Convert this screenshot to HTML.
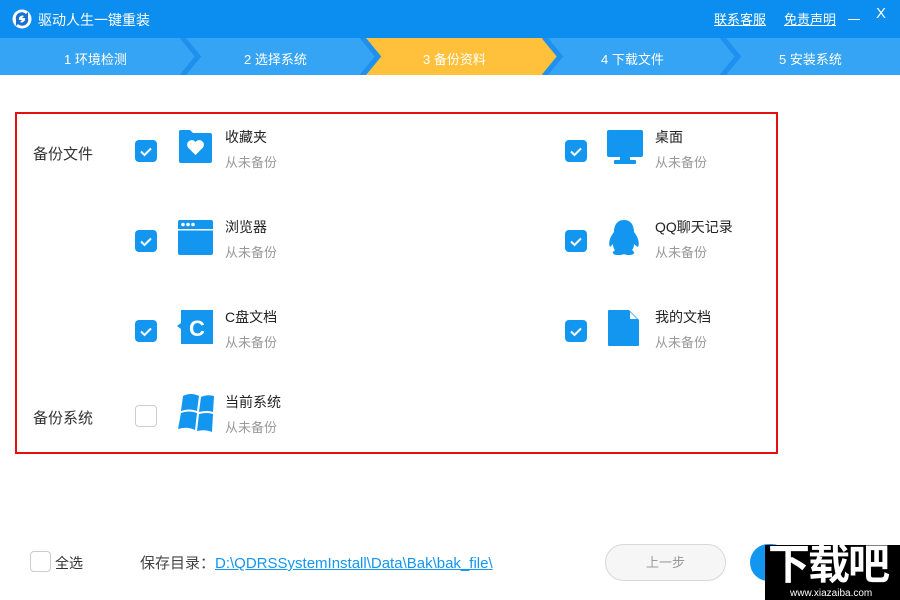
<!DOCTYPE html>
<html><head><meta charset="utf-8"><style>
*{margin:0;padding:0;box-sizing:border-box}
body{width:900px;height:600px;position:relative;overflow:hidden;background:#fff;font-family:"Liberation Sans","Noto Sans CJK SC",sans-serif;}
.a{position:absolute}
.cb{position:absolute;width:22px;height:22px;border-radius:4px;background:#1296f0}
.cb svg{position:absolute;left:0;top:0}
.t{position:absolute;font-size:14px;color:#222;white-space:nowrap}
.s{position:absolute;font-size:13px;color:#999;white-space:nowrap}
</style></head><body>
<div class="a" style="left:0;top:0;width:900px;height:38px;background:#0c8ef0"></div>
<svg class="a" style="left:12px;top:9px" width="20" height="20" viewBox="0 0 20 20"><circle cx="10" cy="10" r="9.5" fill="#fff"/><path d="M4 11 A6 6 0 0 1 14 5 L16 3 L16 9 L10 9 L12 7 A3.5 3.5 0 0 0 7 11Z" fill="#1a6fd0"/><path d="M16 9 A6 6 0 0 1 6 15 L4 17 L4 11 L10 11 L8 13 A3.5 3.5 0 0 0 13 9Z" fill="#1a6fd0"/></svg>
<div class="a" style="left:38px;top:10px;color:#fff;font-size:14px">驱动人生一键重装</div>
<div class="a" style="left:714px;top:9px;color:#fff;font-size:13px;text-decoration:underline">联系客服</div>
<div class="a" style="left:784px;top:9px;color:#fff;font-size:13px;text-decoration:underline">免责声明</div>
<div class="a" style="left:848px;top:19px;width:12px;height:1px;background:#fff"></div>
<div class="a" style="left:876px;top:5px;color:#fff;font-size:15px">X</div>
<svg class="a" style="left:0;top:38px" width="900" height="37">
<rect width="900" height="37" fill="#35a4f5"/>
<polygon points="363,0 545,0 563,18.5 545,37 363,37 381,18.5" fill="#ffc13b"/>
<g fill="none" stroke="#1e90ee" stroke-width="5">
<polyline points="182,-1 198,18.5 182,38"/>
<polyline points="362,-1 378,18.5 362,38"/>
<polyline points="544,-1 560,18.5 544,38"/>
<polyline points="722,-1 738,18.5 722,38"/>
</g>
</svg>
<div class="a" style="left:64px;top:49px;color:#fff;font-size:13px">1 环境检测</div>
<div class="a" style="left:244px;top:49px;color:#fff;font-size:13px">2 选择系统</div>
<div class="a" style="left:423px;top:49px;color:#fff;font-size:13px">3 备份资料</div>
<div class="a" style="left:601px;top:49px;color:#fff;font-size:13px">4 下载文件</div>
<div class="a" style="left:779px;top:49px;color:#fff;font-size:13px">5 安装系统</div>

<div class="a" style="left:15px;top:112px;width:763px;height:342px;border:2px solid #e61010"></div>
<div class="a" style="left:33px;top:143px;font-size:15px;color:#333">备份文件</div>
<div class="a" style="left:33px;top:407px;font-size:15px;color:#333">备份系统</div>

<div class="cb" style="left:135px;top:140px"><svg width="22" height="22"><path d="M6 11.5 L9.5 15 L16 8.5" stroke="#fff" stroke-width="2" fill="none"/></svg></div>
<div class="cb" style="left:135px;top:230px"><svg width="22" height="22"><path d="M6 11.5 L9.5 15 L16 8.5" stroke="#fff" stroke-width="2" fill="none"/></svg></div>
<div class="cb" style="left:135px;top:320px"><svg width="22" height="22"><path d="M6 11.5 L9.5 15 L16 8.5" stroke="#fff" stroke-width="2" fill="none"/></svg></div>
<div class="cb" style="left:135px;top:405px;background:#fff;border:1px solid #ccd"></div>
<div class="cb" style="left:565px;top:140px"><svg width="22" height="22"><path d="M6 11.5 L9.5 15 L16 8.5" stroke="#fff" stroke-width="2" fill="none"/></svg></div>
<div class="cb" style="left:565px;top:230px"><svg width="22" height="22"><path d="M6 11.5 L9.5 15 L16 8.5" stroke="#fff" stroke-width="2" fill="none"/></svg></div>
<div class="cb" style="left:565px;top:320px"><svg width="22" height="22"><path d="M6 11.5 L9.5 15 L16 8.5" stroke="#fff" stroke-width="2" fill="none"/></svg></div>

<svg class="a" style="left:177px;top:129px" width="36" height="36"><path d="M2 3 Q2 1 4 1 L13 1 L16 4 L33 4 Q35 4 35 6 L35 32 Q35 34 33 34 L4 34 Q2 34 2 32Z" fill="#1296f0"/><path d="M18.5 26 L11 18.5 A4 4 0 0 1 18.5 13 A4 4 0 0 1 26 18.5Z" fill="#fff"/></svg>
<svg class="a" style="left:177px;top:219px" width="36" height="36"><rect x="1" y="1" width="35" height="35" rx="2" fill="#1296f0"/><rect x="1" y="10" width="35" height="1.5" fill="#fff"/><circle cx="6" cy="5.5" r="1.8" fill="#fff"/><circle cx="11" cy="5.5" r="1.8" fill="#fff"/><circle cx="16" cy="5.5" r="1.8" fill="#fff"/></svg>
<svg class="a" style="left:177px;top:309px" width="36" height="36"><rect x="4" y="1" width="32" height="34" fill="#1296f0"/><polygon points="4,14 0,17 4,20" fill="#1296f0"/><text x="20" y="27" font-size="22" font-weight="bold" fill="#fff" text-anchor="middle" font-family="Liberation Sans">C</text></svg>
<svg class="a" style="left:177px;top:393px" width="38" height="40"><path d="M6 3 Q14 -1 22 3 L20 18 Q12 15 4 18Z M24 4 Q30 1 37 3 L36 19 Q30 17 22 19Z M4 20 Q12 17 20 20 L18 37 Q10 33 1 36Z M22 21 Q30 19 36 21 L35 39 Q28 36 20 38Z" fill="#1296f0"/></svg>
<svg class="a" style="left:607px;top:129px" width="36" height="36"><rect x="0" y="1" width="36" height="27" rx="2" fill="#1296f0"/><rect x="13" y="28" width="10" height="3" fill="#1296f0"/><rect x="7" y="31" width="22" height="4" rx="1" fill="#1296f0"/></svg>
<svg class="a" style="left:605px;top:219px" width="38" height="38"><path d="M19 1 C27 1 29 8 29 13 C33 18 35 24 33 28 C31 27 30 26 29 25 C29 28 28 30 27 31 C30 33 30 35 26 36 L22 36 C20 35 18 35 16 36 L11 36 C7 35 7 33 10 31 C9 30 8 28 8 25 C7 26 6 27 5 28 C3 24 5 18 9 13 C9 8 11 1 19 1Z" fill="#1296f0"/></svg>
<svg class="a" style="left:607px;top:309px" width="36" height="38"><path d="M1 2 Q1 1 2 1 L22 1 L32 11 L32 36 Q32 37 31 37 L2 37 Q1 37 1 36Z" fill="#1296f0"/><path d="M23 3 L30 10 L23 10Z" fill="#fff"/></svg>

<div class="t" style="left:225px;top:127px">收藏夹</div><div class="s" style="left:225px;top:152px">从未备份</div>
<div class="t" style="left:225px;top:217px">浏览器</div><div class="s" style="left:225px;top:242px">从未备份</div>
<div class="t" style="left:225px;top:307px">C盘文档</div><div class="s" style="left:225px;top:332px">从未备份</div>
<div class="t" style="left:225px;top:392px">当前系统</div><div class="s" style="left:225px;top:417px">从未备份</div>
<div class="t" style="left:655px;top:127px">桌面</div><div class="s" style="left:655px;top:152px">从未备份</div>
<div class="t" style="left:655px;top:217px">QQ聊天记录</div><div class="s" style="left:655px;top:242px">从未备份</div>
<div class="t" style="left:655px;top:307px">我的文档</div><div class="s" style="left:655px;top:332px">从未备份</div>

<div class="a" style="left:30px;top:551px;width:21px;height:21px;border:1px solid #ccc;border-radius:4px"></div>
<div class="a" style="left:55px;top:553px;font-size:14px;color:#333">全选</div>
<div class="a" style="left:140px;top:552px;font-size:15px;color:#444">保存目录：<span style="color:#1296f0;text-decoration:underline">D:\QDRSSystemInstall\Data\Bak\bak_file\</span></div>
<div class="a" style="left:605px;top:544px;width:121px;height:37px;border:1px solid #d8d8d8;border-radius:19px;background:#f6f6f6;color:#999;font-size:13px;text-align:center;line-height:35px">上一步</div>
<div class="a" style="left:750px;top:544px;width:40px;height:37px;border-radius:19px;background:#1296f0"></div>
<div class="a" style="left:765px;top:545px;width:135px;height:55px;background:#000"></div>
<div class="a" style="left:768px;top:540px;color:#fff;font-size:42px;font-weight:bold;letter-spacing:-2px;line-height:50px">下载吧</div>
<div class="a" style="left:790px;top:588px;color:#fff;font-size:10px">www.xiazaiba.com</div>
</body></html>
